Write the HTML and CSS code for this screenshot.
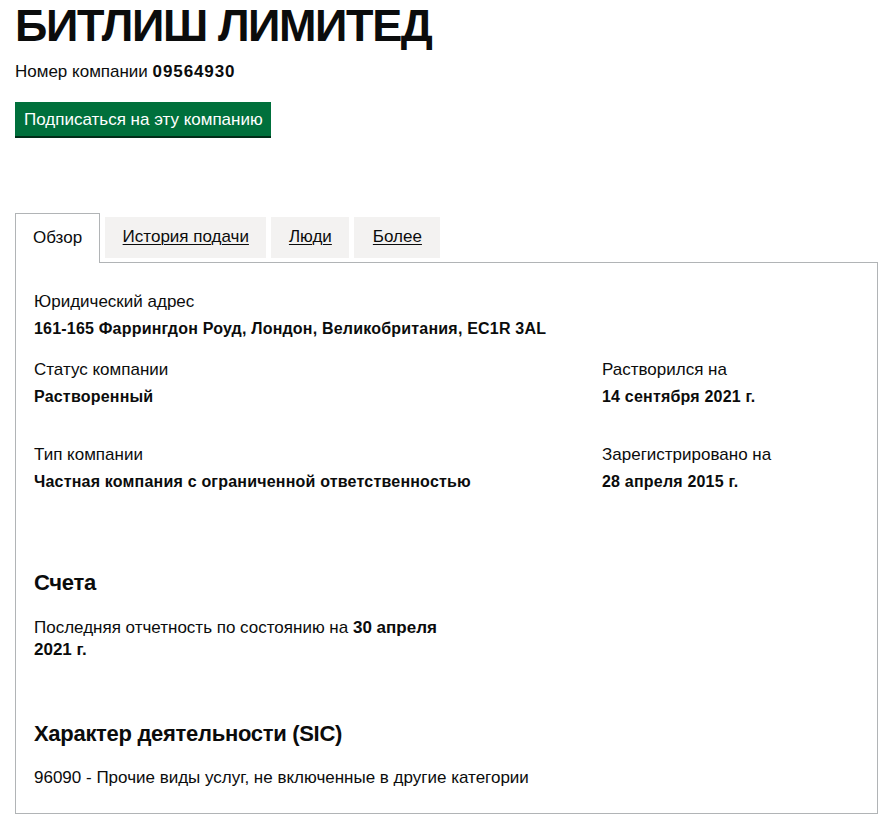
FILE: index.html
```html
<!DOCTYPE html>
<html lang="ru">
<head>
<meta charset="utf-8">
<title>БИТЛИШ ЛИМИТЕД</title>
<link rel="stylesheet" href="styles.css">
</head>
<body>
<main class="page">
  <h1 class="title">БИТЛИШ ЛИМИТЕД</h1>
  <p class="company-number">Номер компании <strong class="number">09564930</strong></p>
  <a class="button" href="#">Подписаться на эту компанию</a>

  <div class="tabs">
    <ul class="tab-list">
      <li class="tab tab-selected"><a href="#">Обзор</a></li>
      <li class="tab"><a href="#">История подачи</a></li>
      <li class="tab"><a href="#">Люди</a></li>
      <li class="tab tab-last"><a href="#">Более</a></li>
    </ul>
    <section class="panel">
      <dl class="field">
        <dt>Юридический адрес</dt>
        <dd>161-165 Фаррингдон Роуд, Лондон, Великобритания, EC1R 3AL</dd>
      </dl>
      <div class="row">
        <dl class="field">
          <dt>Статус компании</dt>
          <dd>Растворенный</dd>
        </dl>
        <dl class="field">
          <dt>Растворился на</dt>
          <dd>14 сентября 2021 г.</dd>
        </dl>
      </div>
      <div class="row">
        <dl class="field">
          <dt>Тип компании</dt>
          <dd>Частная компания с ограниченной ответственностью</dd>
        </dl>
        <dl class="field">
          <dt>Зарегистрировано на</dt>
          <dd>28 апреля 2015 г.</dd>
        </dl>
      </div>

      <h2 class="section-title">Счета</h2>
      <p class="accounts">Последняя отчетность по состоянию на <strong class="accounts-date">30 апреля 2021 г.</strong></p>

      <h2 class="section-title sic-title">Характер деятельности (SIC)</h2>
      <p class="sic">96090 - Прочие виды услуг, не включенные в другие категории</p>
    </section>
  </div>
</main>
</body>
</html>
```

FILE: styles.css
```css
* { box-sizing: border-box; }

html, body {
  margin: 0;
  padding: 0;
  background: #ffffff;
}

body {
  font-family: "Liberation Sans", Arial, sans-serif;
  color: #0b0c0c;
  font-size: 17px;
  line-height: 20px;
}

strong {
  font-weight: 700;
  font-size: 16px;
  letter-spacing: 0.2px;
}

.page {
  padding: 0 11px 0 15px;
}

.title {
  margin: 0;
  font-size: 45px;
  line-height: 52px;
  font-weight: 700;
  letter-spacing: -1.4px;
}

.company-number {
  margin: 10px 0 0 0;
  line-height: 20px;
}

.company-number .number {
  font-size: 17px;
  letter-spacing: 0.9px;
}

.button {
  display: inline-block;
  margin-top: 20px;
  padding: 8px 8px 7px 9px;
  background: #00703c;
  color: #ffffff;
  text-decoration: none;
  font-size: 17px;
  line-height: 19px;
  box-shadow: 0 2px 0 #002d18;
}

.tabs {
  margin-top: 77px;
}

.tab-list {
  list-style: none;
  margin: 0;
  padding: 0;
  display: flex;
  align-items: flex-end;
  gap: 5px;
}

.tab {
  background: #f3f2f1;
  padding: 10px 17.5px 11px;
  margin-bottom: 4px;
}

.tab-last {
  padding-left: 18.5px;
  padding-right: 18.5px;
}

.tab a {
  color: #0b0c0c;
  text-decoration: underline;
  text-decoration-thickness: 1px;
  text-underline-offset: 2px;
  font-size: 17px;
  line-height: 20px;
}

.tab-selected {
  background: #ffffff;
  border: 1px solid #b1b4b6;
  border-bottom: 0;
  padding: 14px 17px 15px;
  margin-bottom: -1px;
  position: relative;
  z-index: 1;
}

.tab-selected a { text-decoration: none; }

.panel {
  border: 1px solid #b1b4b6;
  padding: 29px 18px 25px;
}

.field {
  margin: 0;
}

.field dt {
  margin: 0;
  line-height: 20px;
}

.field dd {
  margin: 7px 0 0 0;
  font-weight: 700;
  font-size: 16px;
  letter-spacing: 0.2px;
  line-height: 20px;
}

.panel > .field { margin-bottom: 21px; }

.row {
  display: grid;
  grid-template-columns: 568px 1fr;
  margin-bottom: 38px;
}

.section-title {
  margin: 79px 0 0 0;
  font-size: 22px;
  line-height: 24px;
  font-weight: 700;
  letter-spacing: -0.3px;
}

.accounts {
  margin: 22px 0 0 0;
  max-width: 420px;
  line-height: 22px;
}

.accounts-date {
  font-size: 17px;
  letter-spacing: 0;
}

.sic-title {
  margin-top: 59px;
  line-height: 28px;
}

.sic {
  margin: 20px 0 0 0;
  line-height: 20px;
}
```
